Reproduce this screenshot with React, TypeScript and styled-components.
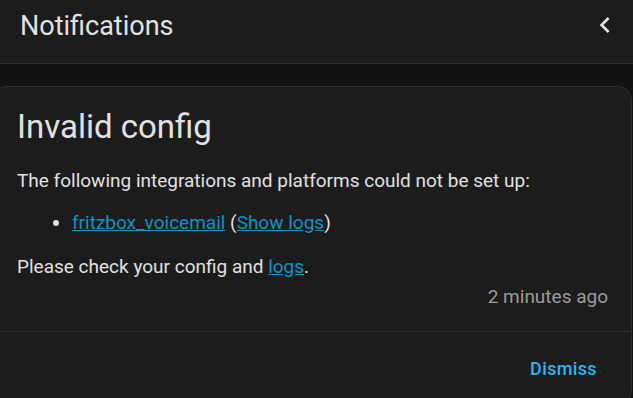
import React from 'react';
import styled, { createGlobalStyle } from 'styled-components';

const GlobalStyle = createGlobalStyle`
    html, body {
        margin: 0;
        padding: 0;
        background: #111111;
        overflow: hidden;
    }
    body {
        font-family: Roboto, 'Noto Sans', sans-serif;
        color: #e1e1e1;
        -webkit-font-smoothing: antialiased;
    }
`;

const Page = styled.div`
    width: 633px;
    height: 398px;
    display: flex;
    flex-direction: column;
    background: #111111;
    overflow: hidden;
`;

const Toolbar = styled.header`
    display: flex;
    align-items: center;
    justify-content: space-between;
    flex-shrink: 0;
    height: 63px;
    padding: 0 12px 0 20px;
    background: #1c1c1c;
    border-bottom: 1px solid #333333;
    box-sizing: content-box;

    h1 {
        margin: 0;
        margin-top: -12px;
        font-size: 27px;
        font-weight: 400;
        color: #e1e1e1;
    }
`;

const IconButton = styled.button`
    display: flex;
    align-items: center;
    justify-content: center;
    width: 32px;
    height: 32px;
    margin-top: -14px;
    padding: 0;
    border: none;
    background: none;
    color: #e1e1e1;
    cursor: pointer;
`;

const Content = styled.main`
    padding-top: 22px;
`;

const Card = styled.section`
    margin: 0 1px 0 -7px;
    background: #1c1c1c;
    border: 1px solid #2f2f2f;
    border-radius: 14px;
    overflow: hidden;
`;

const CardBody = styled.div`
    padding: 16px 23px 24px;
`;

const Title = styled.h2`
    margin: 0 0 20px;
    font-size: 33px;
    font-weight: 400;
    line-height: 48px;
    color: #e1e1e1;
`;

const Text = styled.p`
    margin: 0;
    font-size: 19px;
    line-height: 20px;
`;

const List = styled.ul`
    margin: 22px 0 24px;
    padding-left: 55px;
    font-size: 19px;
    line-height: 20px;
`;

const Link = styled.a`
    color: #0a93c9;
    text-decoration: underline;
`;

const Time = styled.div`
    margin-top: 10px;
    text-align: right;
    font-size: 19px;
    line-height: 20px;
    color: #9b9b9b;
`;

const Actions = styled.div`
    display: flex;
    justify-content: flex-end;
    padding: 18px 26px 18px 8px;
    border-top: 1px solid #333333;
`;

const TextButton = styled.button`
    height: 36px;
    padding: 0 8px;
    border: none;
    background: none;
    font-family: Roboto, sans-serif;
    font-size: 18px;
    font-weight: 500;
    letter-spacing: 0.02em;
    color: #29b6f6;
    cursor: pointer;
`;

export default function App() {
    return (
        <Page>
            <GlobalStyle />
            <Toolbar>
                <h1>Notifications</h1>
                <IconButton aria-label="Close">
                    <svg width="32" height="32" viewBox="0 0 24 24">
                        <path
                            fill="currentColor"
                            d="M15.41,16.58L10.83,12L15.41,7.41L14,6L8,12L14,18L15.41,16.58Z"
                        />
                    </svg>
                </IconButton>
            </Toolbar>
            <Content>
                <Card>
                    <CardBody>
                        <Title>Invalid config</Title>
                        <Text>
                            The following integrations and platforms could not
                            be set up:
                        </Text>
                        <List>
                            <li>
                                <Link href="#">fritzbox_voicemail</Link> (
                                <Link href="#">Show logs</Link>)
                            </li>
                        </List>
                        <Text>
                            Please check your config and{' '}
                            <Link href="#">logs</Link>.
                        </Text>
                        <Time>2 minutes ago</Time>
                    </CardBody>
                    <Actions>
                        <TextButton>Dismiss</TextButton>
                    </Actions>
                </Card>
            </Content>
        </Page>
    );
}
